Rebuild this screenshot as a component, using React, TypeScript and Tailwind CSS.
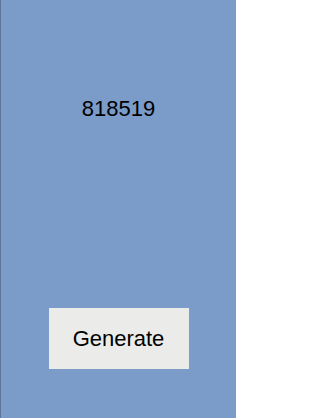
export default function App() {
	return (
		<div
			className="flex h-[418px] w-[236px] flex-col items-center border-l border-[#5f7597] bg-[#7b9bc9] text-black"
			style={{ fontFamily: '"Liberation Sans", Arial, sans-serif' }}
		>
			<p className="mt-[94px] text-[22px] leading-[30px]">818519</p>

			<button className="mt-[184px] flex h-[61px] w-[140px] items-center justify-center bg-[#ebebea] text-[22px]">
				Generate
			</button>
		</div>
	)
}
